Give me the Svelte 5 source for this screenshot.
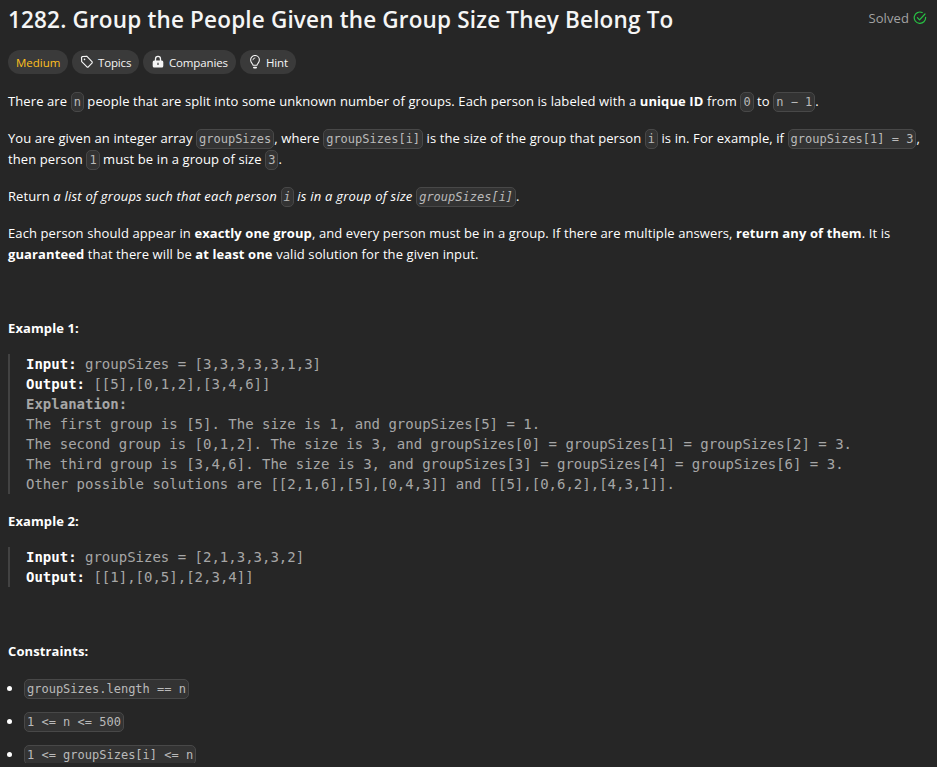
<script>
  const example1 = `The first group is [5]. The size is 1, and groupSizes[5] = 1.
The second group is [0,1,2]. The size is 3, and groupSizes[0] = groupSizes[1] = groupSizes[2] = 3.
The third group is [3,4,6]. The size is 3, and groupSizes[3] = groupSizes[4] = groupSizes[6] = 3.
Other possible solutions are [[2,1,6],[5],[0,4,3]] and [[5],[0,6,2],[4,3,1]].`;
  const constraints = ['groupSizes.length == n', '1 <= n <= 500', '1 <= groupSizes[i] <= n'];
</script>

<main>
  <header>
    <h1>1282. Group the People Given the Group Size They Belong To</h1>
    <div class="solved">
      <span>Solved</span>
      <svg width="14" height="14" viewBox="0 0 14 14" fill="none" stroke="#28c244" stroke-width="1.2" stroke-linecap="round" stroke-linejoin="round">
        <path d="M9.2 1.5A5.7 5.700 0 1 0 12.6 6.3" />
        <path d="M4.4 6.700 6.500 8.800 12 3" />
      </svg>
    </div>
  </header>

  <div class="tags">
    <span class="tag medium">Medium</span>
    <span class="tag topics">
      <svg width="14" height="14" viewBox="0 0 14 14" fill="none" stroke="#f5f5f5" stroke-width="1.15" stroke-linejoin="round">
        <path d="M1.500 2.500 2.400 1.500 6.700 1.200 12.200 6.900 12.200 7.800 8.100 12.100 7.200 12.100 1.700 6.600Z" />
        <circle cx="4.500" cy="4.400" r=".8" fill="#f5f5f5" stroke="none" />
      </svg>
      <span>Topics</span>
    </span>
    <span class="tag companies">
      <svg width="14" height="14" viewBox="0 0 14 14">
        <path d="M4.500 6V3.900a2.500 2.500 0 0 1 5 0V6" fill="none" stroke="#f5f5f5" stroke-width="1.300" />
        <path fill="#f5f5f5" fill-rule="evenodd" d="M3.200 5.400h7.600a1.500 1.500 0 0 1 1.500 1.500v4a1.500 1.500 0 0 1-1.500 1.500H3.200a1.500 1.500 0 0 1-1.500-1.500v-4A1.500 1.500 0 0 1 3.200 5.400Zm3.200 2.400v2.200h1.200V7.800Z" />
      </svg>
      <span>Companies</span>
    </span>
    <span class="tag hint">
      <svg width="14" height="14" viewBox="0 0 14 14" fill="none" stroke="#f5f5f5" stroke-width="1.1" stroke-linecap="round">
        <path d="M5.100 10.300C5.100 8.800 2.600 7.900 2.600 4.900a4.400 4.400 0 0 1 8.800 0c0 3-2.500 3.900-2.500 5.400Z" />
        <path d="M5.800 12.600h2.400" stroke-width="1.600" />
        <path d="M4.900 4.800A2.100 2.100 0 0 1 6.900 2.900" stroke-width=".9" />
      </svg>
      <span>Hint</span>
    </span>
  </div>

  <article>
    <p>There are <code>n</code> people that are split into some unknown number of groups. Each person is labeled with a <strong>unique ID</strong> from <code>0</code> to <code>n − 1</code>.</p>
    <p>You are given an integer array <code>groupSizes</code>, where <code>groupSizes[i]</code> is the size of the group that person <code>i</code> is in. For example, if <code>groupSizes[1] = 3</code>,<br />then person <code>1</code> must be in a group of size <code>3</code>.</p>
    <p>Return <em>a list of groups such that each person <code>i</code> is in a group of size <code>groupSizes[i]</code></em>.</p>
    <p>Each person should appear in <strong>exactly one group</strong>, and every person must be in a group. If there are multiple answers, <strong>return any of them</strong>. It is<br /><strong>guaranteed</strong> that there will be <strong>at least one</strong> valid solution for the given input.</p>
    <p>&nbsp;</p>
    <p><strong>Example 1:</strong></p>
    <pre><b>Input:</b> groupSizes = [3,3,3,3,3,1,3]
<b>Output:</b> [[5],[0,1,2],[3,4,6]]
<b class="muted">Explanation:</b>
{example1}</pre>
    <p><strong>Example 2:</strong></p>
    <pre><b>Input:</b> groupSizes = [2,1,3,3,3,2]
<b>Output:</b> [[1],[0,5],[2,3,4]]</pre>
    <p>&nbsp;</p>
    <p><strong>Constraints:</strong></p>
    <ul>
      {#each constraints as item}
        <li><code>{item}</code></li>
      {/each}
    </ul>
  </article>
</main>

<style>
  :global(body) {
    background: #262626;
  }
  main {
    box-sizing: border-box;
    height: 763px;
    padding: 4px 10px 0 8px;
    overflow: hidden;
    color: #fff;
    font-family: 'Open Sans', 'Noto Sans', sans-serif;
    font-size: 13px;
    letter-spacing: 0.1px;
  }
  header {
    display: flex;
    justify-content: space-between;
    align-items: flex-start;
    height: 32px;
  }
  h1 {
    margin: 0;
    font-size: 22.5px;
    font-weight: 600;
    letter-spacing: 0.17px;
    line-height: 32px;
    white-space: nowrap;
    color: #f5f5f5;
  }
  .solved {
    display: flex;
    align-items: center;
    gap: 4px;
    height: 28px;
    color: #a3a3a3;
  }
  .tags {
    display: flex;
    gap: 4px;
    margin-top: 14px;
  }
  .tag {
    display: flex;
    align-items: center;
    box-sizing: border-box;
    height: 24px;
    padding: 1px 8px 0;
    gap: 4px;
    border-radius: 12px;
    background: #3a3a3a;
    color: #f5f5f5;
    font-size: 11.5px;
    letter-spacing: -0.15px;
    white-space: nowrap;
  }
  .tag svg {
    flex: none;
    margin-top: -1px;
  }
  .medium { width: 60px; color: #ffc01e; letter-spacing: 0; }
  .topics { width: 67px; }
  .companies { width: 93px; }
  .hint { width: 56px; }
  article {
    padding-top: 17px;
  }
  p {
    margin: 0 0 16px;
    line-height: 21px;
    white-space: nowrap;
  }
  em { letter-spacing: 0.22px; }
  code {
    display: inline-block;
    box-sizing: border-box;
    height: 20px;
    margin: -3px 0;
    padding: 0 2px;
    border: 1px solid #484848;
    border-radius: 5px;
    background: #333;
    color: #bababa;
    font-family: 'DejaVu Sans Mono', monospace;
    font-size: 12px;
    line-height: 18px;
    letter-spacing: 0;
    vertical-align: baseline;
    white-space: pre;
  }
  pre {
    margin: -1px 0 17px;
    padding-left: 16px;
    border-left: 2px solid #424242;
    color: #a6a6a6;
    font-family: 'DejaVu Sans Mono', monospace;
    font-size: 14px;
    letter-spacing: 0;
    line-height: 20px;
  }
  pre b { color: #fff; }
  pre .muted { color: #a6a6a6; }
  ul {
    margin: 0;
    padding-left: 16px;
    list-style: none;
  }
  li {
    display: flex;
    align-items: center;
    height: 21px;
    margin-bottom: 12px;
  }
  li::before {
    content: '';
    width: 5px;
    height: 5px;
    margin: 0 12px 0 -17px;
    border-radius: 50%;
    background: #fff;
  }
</style>
